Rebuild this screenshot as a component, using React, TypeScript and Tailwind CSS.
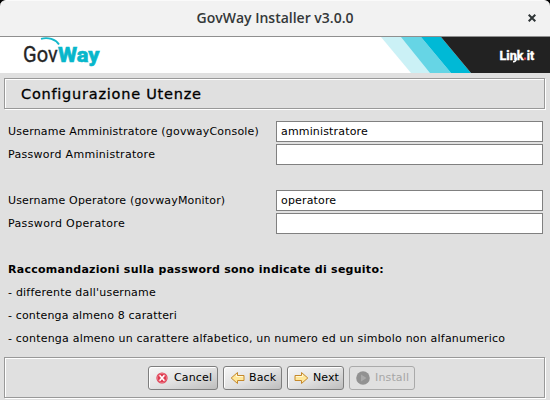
import type { ReactNode } from 'react';

function TitleBar() {
  return (
    <div className="relative h-9 shrink-0 bg-black">
      <div className="flex h-9 items-center justify-center rounded-t-[6px] border-t border-[#fafafa] bg-[#f2f2f2] pb-px">
        <span className="font-['Open_Sans',sans-serif] text-[14px] leading-[18px] font-semibold text-[#343839]">
          GovWay Installer v3.0.0
        </span>
      </div>
      <svg className="absolute top-[14px] right-[14px]" width="8" height="8" viewBox="0 0 8 8">
        <path d="M0.7 0.7 7.3 7.3M7.3 0.7 0.7 7.3" stroke="#2e3436" strokeWidth="2" />
      </svg>
    </div>
  );
}

function Banner() {
  return (
    <svg className="block shrink-0 border-t border-[#8f8f8f] bg-white" width="550" height="37" viewBox="0 37 550 36">
      <path d="M381 37H402L431 73H411Z" fill="#cbf1f6" />
      <path d="M401 37H421L451 73H430Z" fill="#66d5e5" />
      <path d="M421 37H441L471 73H451Z" fill="#00b9d6" />
      <path d="M441 37H550V73H471Z" fill="#222" />
      <path d="M41 38.8C48 37 55.5 39 59 44.6" fill="none" stroke="#14b8cb" strokeWidth="1.9" />
      <text x="23" y="62.4" fontFamily="Roboto, sans-serif" fontSize="21.5" fill="#252525" stroke="#252525" strokeWidth="0.35" textLength="34.6" lengthAdjust="spacingAndGlyphs">Gov</text>
      <text x="58" y="62.4" fontFamily="Roboto, sans-serif" fontWeight="800" fontSize="21" fill="#08b7cb" stroke="#08b7cb" strokeWidth="0.6" textLength="41.5" lengthAdjust="spacingAndGlyphs">Way</text>
      <g fontFamily="Roboto, sans-serif" fontWeight="800" fontSize="12.8" fill="#fff" stroke="#fff" strokeWidth="0.3">
        <text x="499.5" y="59.5" textLength="24" lengthAdjust="spacingAndGlyphs">Link</text>
        <text x="526.8" y="59.5" textLength="7.5" lengthAdjust="spacingAndGlyphs">it</text>
      </g>
      <rect x="524" y="57.5" width="2.2" height="2.2" fill="#e0404e" />
      <path d="M516.2 57.5Q516.4 61.8 513 61.6" fill="none" stroke="#fff" strokeWidth="1.6" />
    </svg>
  );
}

const etched = 'border border-[#999] shadow-[1px_1px_0_#fff,inset_1px_1px_0_#fff]';

function Label({ className = '', children }: { className?: string; children?: ReactNode }) {
  return <div className={`pl-1 text-[11px] leading-[21px] whitespace-nowrap ${className}`}>{children}</div>;
}

function Field({ value }: { value: string }) {
  return (
    <div className="h-[21px] border border-[#808080] bg-white pl-1 text-[11px] leading-[19px] tracking-[0.16px]">
      {value}
    </div>
  );
}

function ArrowIcon({ flip }: { flip?: boolean }) {
  return (
    <svg width="15" height="14" viewBox="0 0 15 14" className={flip ? 'shrink-0 -scale-x-100' : 'shrink-0'}>
      <path d="M1 4.5H7.5V1.5L13.8 7 7.5 12.5V9.5H1Z" fill="#ffe79a" stroke="#c4882c" strokeLinejoin="round" />
      <path d="M2 5.5H8.5V3.5" fill="none" stroke="#fff8d8" />
    </svg>
  );
}

const button =
  'flex h-6 items-center rounded-[3px] border border-[#7e7e7e] bg-linear-to-br from-[#f6f6f6] via-[#e2e2e2] to-[#bdbdbd] text-[11px] shadow-[inset_1px_1px_0_#fff]';

export default function App() {
  return (
    <div className="flex h-[400px] w-[550px] flex-col overflow-hidden bg-[#e0e0e0] font-['DejaVu_Sans',sans-serif] text-black">
      <TitleBar />
      <Banner />
      <h1 className={`mt-[5px] ml-1 h-[31px] w-[541px] shrink-0 pl-4 text-[14.5px] leading-[30px] font-normal tracking-[0.76px] [-webkit-text-stroke:0.3px_black] ${etched}`}>
        Configurazione Utenze
      </h1>
      <div className="mt-3 ml-1 grid w-[539px] shrink-0 auto-rows-[21px] grid-cols-[272px_267px] gap-y-0.5">
        <Label className="tracking-[0.2px]">Username Amministratore (govwayConsole)</Label>
        <Field value="amministratore" />
        <Label className="tracking-[0.3px]">Password Amministratore</Label>
        <Field value="" />
        <div className="col-span-2" />
        <Label className="tracking-[0.165px]">Username Operatore (govwayMonitor)</Label>
        <Field value="operatore" />
        <Label className="tracking-[0.36px]">Password Operatore</Label>
        <Field value="" />
        <div className="col-span-2" />
        <Label className="col-span-2 font-bold tracking-[0.26px]">
          Raccomandazioni sulla password sono indicate di seguito:
        </Label>
        <Label className="col-span-2 tracking-[0.21px]">- differente dall'username</Label>
        <Label className="col-span-2 tracking-[0.155px]">- contenga almeno 8 caratteri</Label>
        <Label className="col-span-2 tracking-[0.2px]">
          - contenga almeno un carattere alfabetico, un numero ed un simbolo non alfanumerico
        </Label>
      </div>
      <div className={`mt-2 ml-1 flex h-[41px] w-[541px] shrink-0 gap-[5px] pt-2 pl-[143px] ${etched}`}>
        <button className={`${button} w-[70px] gap-[6px] pl-[7px] tracking-[0.15px]`}>
          <svg width="12" height="12" viewBox="0 0 12 12" className="shrink-0">
            <circle cx="6" cy="6" r="5.6" fill="#dd3b50" />
            <circle cx="6" cy="6" r="4.6" fill="none" stroke="#f5959f" strokeWidth=".6" />
            <path d="M3.6 3.3 8.4 8.7M8.4 3.3 3.6 8.7" stroke="#fff" strokeWidth="1.7" />
          </svg>
          Cancel
        </button>
        <button className={`${button} w-[59px] gap-1 pl-1.5 tracking-[0.15px]`}>
          <ArrowIcon flip />
          Back
        </button>
        <button className={`${button} w-[57px] gap-1 pl-1.5 tracking-[0.1px]`}>
          <ArrowIcon />
          Next
        </button>
        <button className="flex h-6 w-[66px] items-center gap-[5px] rounded-[3px] border border-[#aaa] pl-1.5 text-[11px] tracking-[0.15px] text-[#a6a6a6]">
          <svg width="14" height="14" viewBox="0 0 14 14" className="shrink-0">
            <circle cx="7" cy="7" r="6.8" fill="#929292" />
            <path d="M5 3.5 10.5 7 5 10.5Z" fill="#aaa" />
          </svg>
          Install
        </button>
      </div>
    </div>
  );
}
